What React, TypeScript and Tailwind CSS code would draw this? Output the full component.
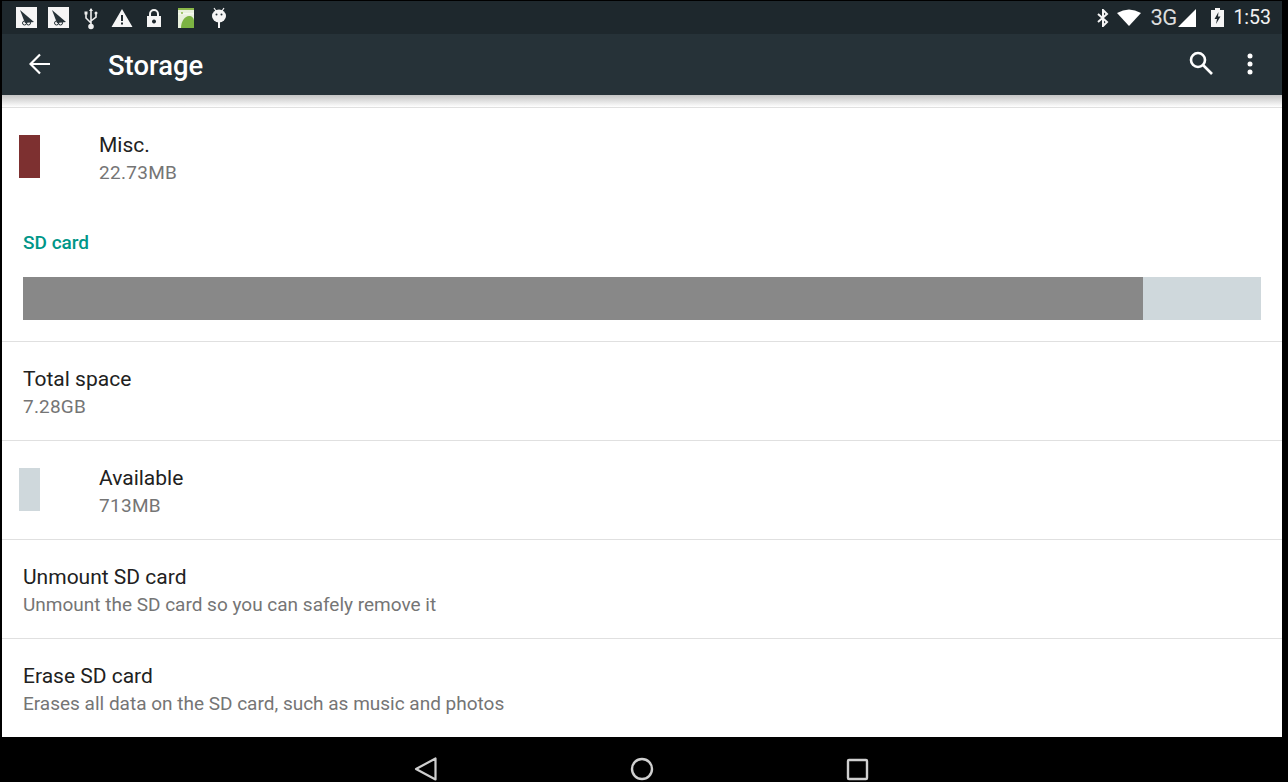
import React from "react";

function Row({ title, sub, swatch, divider = true, subClass = "" }: { title: string; sub: string; swatch?: string; divider?: boolean; subClass?: string }) {
  return (
    <div className={`h-[99px] shrink-0 flex items-center pt-[2px] ${divider ? "border-b border-[#e0e0e0]" : ""} ${swatch ? "pl-[17px]" : "pl-[21px]"}`}>
      {swatch && <div className={`w-[21px] h-[43px] mr-[59px] -mt-[4px] ${swatch}`} />}
      <div className="flex flex-col">
        <div className="text-[21px] leading-[28px] text-[#212121]">{title}</div>
        <div className={`text-[19px] leading-[27px] text-[#757575] ${subClass}`}>{sub}</div>
      </div>
    </div>
  );
}

function Notif() {
  return (
    <svg width="21" height="21" viewBox="0 0 21 21" className="shrink-0">
      <rect width="21" height="21" fill="#f5f5f5" />
      <path d="M4 3 L18 15 L9 16 Z" fill="#263238" />
      <circle cx="8.5" cy="16" r="2" fill="none" stroke="#263238" />
      <circle cx="12.5" cy="16" r="2" fill="none" stroke="#263238" />
    </svg>
  );
}

export default function App() {
  return (
    <div className="w-[1288px] h-[782px] bg-black overflow-hidden pl-[2px] pr-[6px] flex flex-col font-['Roboto',sans-serif]">
      <div className="h-[33px] shrink-0 bg-[#1e282d] flex items-center mt-px text-white">
        <div className="flex items-center pl-[14px]">
          <Notif />
          <div className="w-[11px]" />
          <Notif />
          <svg width="16" height="24" viewBox="0 0 16 24" className="ml-[14px]" fill="none" stroke="#eee" strokeWidth="1.6">
            <path d="M8 3V21M8 17L3 12V8M8 15L13 11V8" />
            <circle cx="8" cy="20.5" r="2" fill="#eee" />
            <rect x="1.5" y="5.5" width="3" height="3" fill="#eee" stroke="none" />
            <circle cx="13" cy="7" r="1.5" fill="#eee" stroke="none" />
            <path d="M6 5L8 2L10 5Z" fill="#eee" stroke="none" />
          </svg>
          <svg width="22" height="20" viewBox="0 0 22 20" className="ml-[12px]">
            <path fillRule="evenodd" d="M11 1L21.5 19H0.5ZM10 7V13H12V7ZM10 14.5V16.5H12V14.5Z" fill="#f5f5f5" />
          </svg>
          <svg width="16" height="20" viewBox="0 0 16 20" className="ml-[13px]">
            <path d="M4 9V6a4 4 0 0 1 8 0V9" fill="none" stroke="#f5f5f5" strokeWidth="2" />
            <path fillRule="evenodd" d="M1 8H15V19H1ZM8 11.5a2 2 0 1 0 .01 0Z" fill="#f5f5f5" />
          </svg>
          <svg width="16" height="20" viewBox="0 0 16 20" className="ml-[16px]">
            <rect width="16" height="20" fill="#e8f0dc" />
            <rect width="16" height="2" fill="#8bb84a" />
            <path d="M3 20C3 13 7 8 11 8C14 8 16 10 16 13V20Z" fill="#7cb342" />
            <path d="M0 5H16V6.5H0Z" fill="#f5f8ee" />
            <circle cx="4" cy="5" r="1" fill="#8bb84a" />
          </svg>
          <svg width="16" height="22" viewBox="0 0 16 22" className="ml-[17px]">
            <path d="M3 1L5 4M13 1L11 4" stroke="#f5f5f5" strokeWidth="1.2" />
            <ellipse cx="8" cy="9" rx="7" ry="6.5" fill="#f5f5f5" />
            <circle cx="5.5" cy="7.5" r="1" fill="#263238" />
            <circle cx="10.5" cy="7.5" r="1" fill="#263238" />
            <rect x="7" y="15" width="2" height="6" fill="#f5f5f5" />
          </svg>
        </div>
        <div className="ml-auto flex items-center">
          <svg width="12" height="18" viewBox="0 0 12 18" fill="none" stroke="#f5f5f5" strokeWidth="2">
            <path d="M1 5L10 13L6 17V1L10 5L1 13" />
          </svg>
          <svg width="24" height="17" viewBox="0 0 24 17" className="ml-[8px]">
            <path d="M12 17L0 4Q12 -3 24 4Z" fill="#fff" />
          </svg>
          <span className="ml-[9px] w-[26px] text-[22px] leading-none text-[#dcdcdc] tracking-[-0.5px]">3G</span>
          <svg width="18" height="18" viewBox="0 0 18 18" className="ml-[2px]">
            <path d="M18 0V18H0Z" fill="#fff" />
          </svg>
          <svg width="13" height="19" viewBox="0 0 13 19" className="ml-[15px]">
            <path fillRule="evenodd" d="M4 0H9V2H13V19H0V2H4ZM7.5 4L3.5 11H6L5 16L9.5 8.5H7Z" fill="#f5f5f5" />
          </svg>
          <span className="ml-[9px] mr-[11px] text-[19.5px] leading-none text-[#f2f2f2]">1:53</span>
        </div>
      </div>

      <div className="h-[61px] shrink-0 bg-[#263238] flex items-center text-white z-10">
        <svg width="22" height="22" viewBox="0 0 22 22" className="ml-[27px] -mt-[2px]" fill="none" stroke="#fff" strokeWidth="2.2">
          <path d="M21 11H2M11 1.5L1.5 11L11 20.5" />
        </svg>
        <span className="ml-[57px] mt-[4px] text-[27.4px] leading-none font-medium">Storage</span>
        <svg width="24" height="24" viewBox="0 0 24 24" className="ml-auto mr-[34px] -mt-[4px]" fill="none" stroke="#fff" strokeWidth="2.6">
          <circle cx="9" cy="9" r="7" />
          <path d="M14 14L23 23" />
        </svg>
        <svg width="6" height="22" viewBox="0 0 6 22" className="mr-[29px] -mt-[1px]" fill="#fff">
          <circle cx="3" cy="3" r="2.5" />
          <circle cx="3" cy="11" r="2.5" />
          <circle cx="3" cy="19" r="2.5" />
        </svg>
      </div>

      <div className="bg-white flex flex-col h-[642px] shrink-0 overflow-hidden">
        <div className="h-[12px] shrink-0 bg-gradient-to-b from-[#c4c4c4] to-white" />
        <div className="h-px shrink-0 bg-[#e0e0e0]" />
        <div className="h-[85px] shrink-0 flex items-start pl-[17px] pt-[27px]">
          <div className="w-[21px] h-[43px] mr-[59px] bg-[#7d3030]" />
          <div className="flex flex-col -mt-[4px]">
            <div className="text-[21px] leading-[28px] text-[#212121]">Misc.</div>
            <div className="text-[19px] leading-[27px] text-[#757575] tracking-[0.3px]">22.73MB</div>
          </div>
        </div>
        <div className="pl-[21px] pt-[37px] text-[19px] leading-[26px] font-medium text-[#009688]">SD card</div>
        <div className="mx-[21px] mt-[21px] h-[43px] shrink-0 flex bg-[#cfd8dc]">
          <div className="w-[1120px] bg-[#888888]" />
        </div>
        <div className="h-[22px] shrink-0 border-b border-[#e0e0e0]" />
        <Row title="Total space" sub="7.28GB" subClass="tracking-[0.2px]" />
        <Row title="Available" sub="713MB" swatch="bg-[#cfd8dc]" subClass="tracking-[0.3px]" />
        <Row title="Unmount SD card" sub="Unmount the SD card so you can safely remove it" />
        <Row title="Erase SD card" sub="Erases all data on the SD card, such as music and photos" divider={false} />
      </div>

      <div className="flex-1">
        <div className="flex items-center pt-[20px] pl-[412px]">
          <svg width="24" height="24" viewBox="0 0 24 24" fill="none" stroke="#cfcfcf" strokeWidth="2.2" strokeLinejoin="round">
            <path d="M2 12L21.5 1.5V22.5Z" />
          </svg>
          <svg width="24" height="24" viewBox="0 0 24 24" fill="none" stroke="#cfcfcf" strokeWidth="2.4" className="ml-[192px]">
            <circle cx="12" cy="12" r="10" />
          </svg>
          <svg width="23" height="23" viewBox="0 0 23 23" fill="none" stroke="#cfcfcf" strokeWidth="2.4" className="ml-[192px]">
            <rect x="2" y="2" width="19" height="19" rx="1" />
          </svg>
        </div>
      </div>
    </div>
  );
}
